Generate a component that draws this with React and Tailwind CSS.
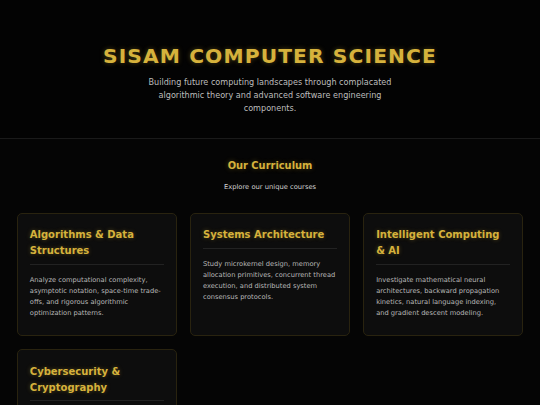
import React from "react";

const courses = [
  {
    title: "Algorithms & Data Structures",
    body: "Analyze computational complexity, asymptotic notation, space-time trade-offs, and rigorous algorithmic optimization patterns.",
  },
  {
    title: "Systems Architecture",
    body: "Study microkernel design, memory allocation primitives, concurrent thread execution, and distributed system consensus protocols.",
  },
  {
    title: "Intelligent Computing & AI",
    body: "Investigate mathematical neural architectures, backward propagation kinetics, natural language indexing, and gradient descent modeling.",
  },
  {
    title: "Cybersecurity & Cryptography",
    body: "Explore cryptographic primitives, public-key infrastructure, secure protocol design, and adversarial threat modeling.",
  },
];

export default function App() {
  return (
    <div className="min-h-screen bg-[#050505] font-['DejaVu_Sans',Verdana,sans-serif] leading-[1.6]">
      <header className="border-b border-[#1a1a1a] bg-[#030303] px-[18px] pt-[40px] pb-[23px] text-center">
        <h1 className="text-[20.25px] font-bold tracking-[1.1px] text-[#d6b23c] [text-shadow:0_0_5px_rgba(212,175,55,0.35)]">
          SISAM COMPUTER SCIENCE
        </h1>
        <p className="mx-auto mt-[4px] max-w-[253px] text-[8.1px] leading-[12.96px] text-[#bdbdbd]">
          Building future computing landscapes through complacated algorithmic theory and advanced software engineering components.
        </p>
      </header>
      <section className="px-[17px] pt-[19px]">
        <h2 className="text-center text-[9.9px] font-bold text-[#d6b23c] [text-shadow:0_0_5px_rgba(212,175,55,0.35)]">
          Our Curriculum
        </h2>
        <p className="mt-[8px] text-center text-[6.75px] text-[#d0d0d0]">
          Explore our unique courses
        </p>
        <div className="mt-[20px] grid grid-cols-3 gap-[13.5px]">
          {courses.map((c) => (
            <div
              key={c.title}
              className="rounded-[5px] border border-[#29230f] bg-[#0d0d0d] px-[11.8px] pt-[13.5px] pb-[16.5px]"
            >
              <h3 className="border-b border-[#222] pb-[4.5px] text-[10px] font-bold leading-[15.9px] text-[#d6b23c] [text-shadow:0_0_4px_rgba(212,175,55,0.35)]">
                {c.title}
              </h3>
              <p className="mt-[10.5px] text-[6.7px] leading-[10.8px] text-[#b8b8b8]">
                {c.body}
              </p>
            </div>
          ))}
        </div>
      </section>
    </div>
  );
}
